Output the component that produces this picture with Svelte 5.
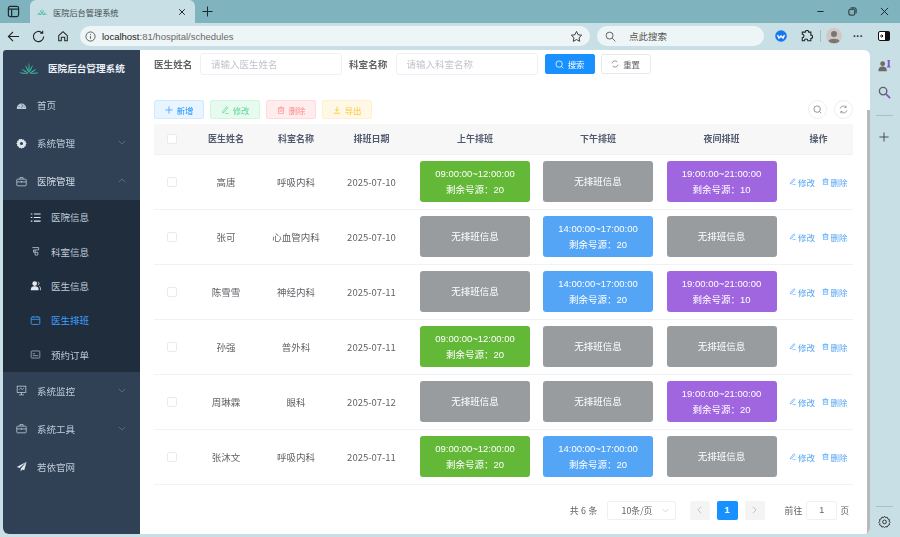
<script>
  const sched = {
    am: ['09:00:00~12:00:00', 'c-am'],
    pm: ['14:00:00~17:00:00', 'c-pm'],
    ni: ['19:00:00~21:00:00', 'c-ni'],
  };
  const rows = [
    ['高唐', '呼吸内科', '2025-07-10', ['am', 20], null, ['ni', 10]],
    ['张可', '心血管内科', '2025-07-10', null, ['pm', 20], null],
    ['陈雪雪', '神经内科', '2025-07-11', null, ['pm', 20], ['ni', 10]],
    ['孙强', '普外科', '2025-07-11', ['am', 20], null, null],
    ['周琳霖', '眼科', '2025-07-12', null, null, ['ni', 20]],
    ['张沐文', '呼吸内科', '2025-07-11', ['am', 20], ['pm', 20], null],
  ];
  const subs = ['医院信息', '科室信息', '医生信息', '医生排班', '预约订单'];
  const leaf = 'M12 12.500C11 8 11.200 4 12 .5c.8 3.500 1 7.500 0 12zM11.500 12.500C9.500 9.500 8 6.500 7.200 3c2.300 2.500 4 5.500 4.800 9.500zM12.500 12.500c2-3 3.500-6 4.300-9.500-2.300 2.500-4 5.500-4.800 9.500zM11 12.800C8 10.500 5.500 9 3 8.300c2.500 2.700 5 4.300 8 5.200zM13 12.800c3-2.300 5.500-3.800 8-4.500-2.500 2.700-5 4.300-8 5.200zM10.500 13.300C7 12.800 3.500 12.300.3 12.600c3.200 1.400 6.500 1.600 10.200 1.200zM13.500 13.300c3.500-.5 7-1 10.200-.7-3.200 1.400-6.500 1.600-10.200 1.200z';
</script>

<div class="screen">
  <header class="tabbar">
    <svg class="tabs-ic" viewBox="0 0 14 14" width="13" height="13"><rect x="1.500" y="1.500" width="11" height="11" rx="2" fill="none" stroke="#1d2b30" stroke-width="1.300"/><path d="M1.500 4.500h11M5 4.500v8" stroke="#1d2b30" stroke-width="1.300" fill="none"/></svg>
    <div class="tab">
      <svg viewBox="0 0 24 14" width="12" height="7"><path d={leaf} fill="#4db6a0"/></svg>
      <span class="tab-title">医院后台管理系统</span>
      <svg class="tab-x" viewBox="0 0 10 10" width="8" height="8"><path d="M1.500 1.500l7 7M8.500 1.500l-7 7" stroke="#222" stroke-width="1.200"/></svg>
    </div>
    <svg class="tab-plus" viewBox="0 0 12 12" width="11" height="11"><path d="M6 .5v11M.5 6h11" stroke="#1d2b30" stroke-width="1.100"/></svg>
    <div class="win">
      <svg viewBox="0 0 10 10" width="9" height="9"><path d="M1.500 5h7" stroke="#1d2b30" stroke-width="1.100"/></svg>
      <svg viewBox="0 0 10 10" width="9" height="9"><rect x="1" y="2.500" width="6.500" height="6.500" rx="1.200" fill="none" stroke="#1d2b30" stroke-width="1.100"/><path d="M3 1h4.500A1.500 1.500 0 0 1 9 2.500V7" fill="none" stroke="#1d2b30" stroke-width="1.100"/></svg>
      <svg viewBox="0 0 10 10" width="9" height="9"><path d="M1 1l8 8M9 1l-8 8" stroke="#1d2b30" stroke-width="1.100"/></svg>
    </div>
  </header>

  <nav class="toolbar">
    <svg class="tb-ic" viewBox="0 0 14 14" width="13" height="13"><path d="M13 7H1.500M6.500 2L1.500 7l5 5" fill="none" stroke="#222" stroke-width="1.200"/></svg>
    <svg class="tb-ic" viewBox="0 0 14 14" width="13" height="13"><path d="M12.500 7A5.500 5.500 0 1 1 10.800 3M11.500 .8V3.500H8.800" fill="none" stroke="#222" stroke-width="1.200"/></svg>
    <svg class="tb-ic" viewBox="0 0 14 14" width="12" height="12"><path d="M2 6.500L7 2l5 4.500V12.500H9V8.500H5v4H2z" fill="none" stroke="#222" stroke-width="1.200" stroke-linejoin="round"/></svg>
    <div class="addr">
      <svg viewBox="0 0 12 12" width="11" height="11"><circle cx="6" cy="6" r="5" fill="none" stroke="#555" stroke-width="1"/><path d="M6 5.500v3M6 3.200v1" stroke="#555" stroke-width="1"/></svg>
      <span class="url"><b>localhost</b>:81/hospital/schedules</span>
      <svg class="star" viewBox="0 0 14 14" width="13" height="13"><path d="M7 1.500l1.700 3.600 3.900.5-2.900 2.700.8 3.900L7 10.300l-3.500 1.900.8-3.900L1.400 5.600l3.900-.5z" fill="none" stroke="#333" stroke-width="1"/></svg>
    </div>
    <div class="bsearch">
      <svg viewBox="0 0 12 12" width="11" height="11"><circle cx="5" cy="5" r="3.800" fill="none" stroke="#555" stroke-width="1"/><path d="M8 8l3.300 3.300" stroke="#555" stroke-width="1"/></svg>
      <span>点此搜索</span>
    </div>
    <div class="ext">
      <svg viewBox="0 0 12 12" width="12" height="12"><circle cx="6" cy="6" r="5.800" fill="#1677f0"/><path d="M2.500 5l1.500 3 2-2 2 2 1.500-3" fill="none" stroke="#fff" stroke-width="1.400"/></svg>
      <svg class="puzzle" viewBox="0 0 14 14" width="12" height="12"><path d="M5 2.500a2 2 0 0 1 4 0h2.500V6a2 2 0 0 1 0 4v2.500H8a2 2 0 0 0-4 0H1.500V9a2 2 0 0 0 0-4V2.500z" fill="none" stroke="#222" stroke-width="1.300"/></svg>
      <i class="sep"></i>
      <svg viewBox="0 0 16 16" width="16" height="16"><circle cx="8" cy="8" r="8" fill="#cfc8c4"/><circle cx="8" cy="6" r="3" fill="#7b7673"/><path d="M2.500 13c1-3 10-3 11 0-2.500 3-8.500 3-11 0z" fill="#7b7673"/></svg>
      <span class="dots">···</span>
      <svg class="panel" viewBox="0 0 12 10" width="12" height="10"><rect x=".5" y=".5" width="11" height="9" rx="1.500" fill="#fff" stroke="#111"/><rect x="7" y=".5" width="4.500" height="9" fill="#111"/><path d="M2 5h3M3.500 3.500L5 5 3.500 6.500" stroke="#111" fill="none"/></svg>
    </div>
  </nav>

  <div class="stage">
    <div class="window">
      <aside class="side">
        <div class="brand">
          <svg viewBox="0 0 24 14" width="20" height="12"><path d={leaf} fill="#3fb59a"/></svg>
          <span>医院后台管理系统</span>
        </div>
        <a class="item">
          <svg class="mi" viewBox="0 0 14 14"><path d="M1 10.500a6 6 0 0 1 12 0c0 .5-.2.900-.6.900H1.600c-.4 0-.6-.4-.6-.9z" fill="#bfcbd9"/><path d="M7 10L9 6.200M4 8v1M10.500 8.500v1M7 5v1" stroke="#304156" stroke-width=".9"/></svg>
          <span>首页</span>
        </a>
        <a class="item">
          <svg class="mi" viewBox="0 0 14 14"><path fill-rule="evenodd" d="M7 .8l1.300 1.400 1.900-.3.600 1.800 1.800.6-.3 1.900L13.700 7l-1.400 1.300.3 1.900-1.800.6-.6 1.800-1.900-.3L7 13.700l-1.300-1.400-1.900.3-.6-1.800-1.800-.6.3-1.900L.3 7l1.400-1.300-.3-1.900 1.800-.6.6-1.800 1.900.3zM7 5a2 2 0 1 0 0 4 2 2 0 0 0 0-4z" fill="#dfe5ec"/></svg>
          <span>系统管理</span>
          <svg class="chev" viewBox="0 0 10 6"><path d="M1 1l4 4 4-4" fill="none" stroke="#6f7d8e" stroke-width=".9"/></svg>
        </a>
        <a class="item">
          <svg class="mi" viewBox="0 0 14 14"><rect x="1" y="4" width="12" height="8.500" rx="1" fill="none" stroke="#bfcbd9"/><path d="M5 4V2h4v2M1 7.500h12M7 6.500v2" fill="none" stroke="#bfcbd9"/></svg>
          <span class="hot">医院管理</span>
          <svg class="chev" viewBox="0 0 10 6"><path d="M1 5l4-4 4 4" fill="none" stroke="#6f7d8e" stroke-width=".9"/></svg>
        </a>
        <div class="subs">
          {#each subs as s, i}
            <a class="sub" class:on={i === 3}>
              <svg class="si" viewBox="0 0 14 14">
                {#if i === 0}
                  <path d="M1 2.500h2M5 2.500h8.500M1 7h2M5 7h8.500M1 11.500h2M5 11.500h8.500" stroke="#e4e9ef" stroke-width="1.500"/>
                {:else if i === 1}
                  <path d="M3 2h8v3H4.500v3H10v3.500H6.500V5" fill="none" stroke="#bfcbd9" stroke-width="1"/>
                {:else if i === 2}
                  <circle cx="6" cy="4.500" r="3" fill="#e4e9ef"/><path d="M1 13c0-4 2-5 5-5s5 1 5 5z" fill="#e4e9ef"/><path d="M10 2.500c2 .5 2 3.500 0 4M12 8c1 1 1.500 2.500 1.500 5" fill="none" stroke="#e4e9ef"/>
                {:else if i === 3}
                  <rect x="1.500" y="2.500" width="11" height="9.500" rx="1.500" fill="none" stroke="#409eff" stroke-width="1.100"/><path d="M1.500 5.500h11M4 1.500v2M10 1.500v2" stroke="#409eff"/>
                {:else}
                  <rect x="1.500" y="2.500" width="11" height="9" rx="1" fill="none" stroke="#a6b2c0"/><path d="M3.500 6h3M3.500 8.500h7" stroke="#a6b2c0"/>
                {/if}
              </svg>
              <span>{s}</span>
            </a>
          {/each}
        </div>
        <a class="item">
          <svg class="mi" viewBox="0 0 14 14"><rect x="1.500" y="1.500" width="11" height="8" fill="none" stroke="#bfcbd9"/><path d="M7 9.500v3M4 12.500h6M4 6l2-2 2 2 2-2" fill="none" stroke="#bfcbd9"/></svg>
          <span>系统监控</span>
          <svg class="chev" viewBox="0 0 10 6"><path d="M1 1l4 4 4-4" fill="none" stroke="#6f7d8e" stroke-width=".9"/></svg>
        </a>
        <a class="item">
          <svg class="mi" viewBox="0 0 14 14"><rect x="1" y="4" width="12" height="8.500" rx="1" fill="none" stroke="#bfcbd9"/><path d="M5 4V2h4v2M1 7.500h12M7 6.500v2" fill="none" stroke="#bfcbd9"/></svg>
          <span>系统工具</span>
          <svg class="chev" viewBox="0 0 10 6"><path d="M1 1l4 4 4-4" fill="none" stroke="#6f7d8e" stroke-width=".9"/></svg>
        </a>
        <a class="item">
          <svg class="mi" viewBox="0 0 14 14"><path d="M13.500 1L1 7.500l3.500 1.500L13.500 1 6 10v3.500l2-2.800 2.500 1z" fill="#e4e9ef"/></svg>
          <span>若依官网</span>
        </a>
      </aside>

      <main class="main">
        <form class="filters">
          <label for="f1">医生姓名</label>
          <div class="field w142"><input id="f1" placeholder="请输入医生姓名" /></div>
          <label for="f2">科室名称</label>
          <div class="field w142"><input id="f2" placeholder="请输入科室名称" /></div>
          <button type="button" class="btn primary">
            <svg viewBox="0 0 12 12" width="9" height="9"><circle cx="5.500" cy="5.500" r="4.300" fill="none" stroke="#fff" stroke-width="1"/><path d="M8.500 8.500l2.500 2.500" stroke="#fff"/></svg>
            搜索
          </button>
          <button type="button" class="btn ghost">
            <svg viewBox="0 0 12 12" width="8" height="8"><path d="M1.500 5a4.600 4.600 0 0 1 8-2M10.500 7a4.600 4.600 0 0 1-8 2" fill="none" stroke="#666" stroke-width="1"/></svg>
            重置
          </button>
        </form>

        <div class="actions">
          <button type="button" class="act a-blue"><svg viewBox="0 0 10 10" width="8" height="8"><path d="M5 .5v9M.5 5h9" stroke="#409eff"/></svg>新增</button>
          <button type="button" class="act a-green"><svg viewBox="0 0 10 10" width="8" height="8"><path d="M2 7l5-6 1.500 1.200-5 6L2 8.500zM5 9.500h4.500" fill="none" stroke="#52d98d" stroke-width=".9"/></svg>修改</button>
          <button type="button" class="act a-red"><svg viewBox="0 0 10 10" width="8" height="8"><path d="M2 2.500h6v7H2zM.8 2.500h8.400M4 1h2M4 4.500v3M6 4.500v3" fill="none" stroke="#ff8b8b" stroke-width=".9"/></svg>删除</button>
          <button type="button" class="act a-yellow"><svg viewBox="0 0 10 10" width="8" height="8"><path d="M5 1v5.500M2.800 4.300L5 6.500l2.200-2.200M1 9h8" fill="none" stroke="#ffba00" stroke-width=".9"/></svg>导出</button>
          <div class="round-group">
            <span class="round"><svg viewBox="0 0 12 12" width="9" height="9"><circle cx="5.500" cy="5.500" r="4.300" fill="none" stroke="#777" stroke-width="1"/><path d="M8.500 8.500l2.500 2.500" stroke="#777"/></svg></span>
            <span class="round"><svg viewBox="0 0 12 12" width="9" height="9"><path d="M1.500 5a4.600 4.600 0 0 1 8-2M9.500 1v2.300H7.200M10.500 7a4.600 4.600 0 0 1-8 2M2.500 11V8.700h2.300" fill="none" stroke="#777" stroke-width=".9"/></svg></span>
          </div>
        </div>

        <table class="grid">
          <colgroup>
            <col class="c36" /><col class="c72" /><col class="c68" /><col class="c83" />
            <col class="c124" /><col class="c122" /><col class="c125" /><col class="c69" />
          </colgroup>
          <thead>
            <tr>
              <th><i class="check"></i></th>
              <th>医生姓名</th><th>科室名称</th><th>排班日期</th>
              <th>上午排班</th><th>下午排班</th><th>夜间排班</th><th>操作</th>
            </tr>
          </thead>
          <tbody>
            {#each rows as r}
              <tr>
                <td><i class="check"></i></td>
                <td>{r[0]}</td><td>{r[1]}</td><td>{r[2]}</td>
                {#each [r[3], r[4], r[5]] as c}
                  <td>
                    {#if c}
                      <div class="card {sched[c[0]][1]}"><span>{sched[c[0]][0]}</span><span>剩余号源：{c[1]}</span></div>
                    {:else}
                      <div class="card c-none"><span>无排班信息</span></div>
                    {/if}
                  </td>
                {/each}
                <td>
                  <div class="ops">
                    <a><svg viewBox="0 0 10 10" width="7" height="7"><path d="M2 7l5-6 1.500 1.200-5 6L2 8.500zM5 9.500h4.500" fill="none" stroke="#409eff" stroke-width=".9"/></svg>修改</a>
                    <a><svg viewBox="0 0 10 10" width="7" height="7"><path d="M2 2.500h6v7H2zM.8 2.500h8.400M4 1h2M4 4.500v3M6 4.500v3" fill="none" stroke="#409eff" stroke-width=".9"/></svg>删除</a>
                  </div>
                </td>
              </tr>
            {/each}
          </tbody>
        </table>

        <div class="pager">
          <span class="total">共 6 条</span>
          <span class="size">10条/页<svg viewBox="0 0 10 6" width="7" height="5"><path d="M1 1l4 4 4-4" fill="none" stroke="#c0c4cc"/></svg></span>
          <span class="pg"><svg viewBox="0 0 6 10" width="5" height="8"><path d="M5 1L1 5l4 4" fill="none" stroke="#b4b7bd"/></svg></span>
          <span class="pg cur">1</span>
          <span class="pg last"><svg viewBox="0 0 6 10" width="5" height="8"><path d="M1 1l4 4-4 4" fill="none" stroke="#b4b7bd"/></svg></span>
          <span class="goto">前往</span>
          <span class="jump">1</span>
          <span class="ye">页</span>
        </div>
      </main>
      <div class="thumb"></div>
    </div>

    <aside class="rail">
      <svg class="r1" viewBox="0 0 16 16" width="15" height="15"><circle cx="6" cy="6" r="2.600" fill="#6d6a68"/><path d="M1.500 14c0-4 2-5 4.500-5s4.500 1 4.500 5z" fill="#6d6a68"/><path d="M10.500 2h4l-1 1v5l1 2h-4l1-2V3z" fill="#7f58c9"/></svg>
      <svg class="r2" viewBox="0 0 14 14" width="13" height="13"><circle cx="5.500" cy="5.500" r="4" fill="none" stroke="#5d6266" stroke-width="1.500"/><path d="M8.500 8.500L13 13" stroke="#8a4bc7" stroke-width="1.800"/></svg>
      <i class="rsep"></i>
      <svg class="r3" viewBox="0 0 12 12" width="10" height="10"><path d="M6 .5v11M.5 6h11" stroke="#333" stroke-width="1"/></svg>
      <i class="rsep bottom"></i>
      <svg class="r4" viewBox="0 0 16 16" width="13" height="13"><path d="M8 1.500l1.200 1.700 2.100-.4.800 2 2 .8-.4 2.100L15 9l-1.300 1.300.4 1.900-2 .8-.8 1.800-2.100-.4L8 15.500l-1.200-1.100-2.100.4-.8-1.800-2-.8.4-1.900L1 9l1.300-1.300-.4-2.100 2-.8.8-2 2.100.4z" fill="none" stroke="#222" stroke-width="1.100"/><circle cx="8" cy="8.500" r="2.300" fill="none" stroke="#222" stroke-width="1.100"/></svg>
    </aside>
  </div>
</div>

<style>
  :global(body) { margin: 0; background: #c8e0e5; }
  * { box-sizing: border-box; }
  .screen {
    width: 900px; height: 537px; overflow: hidden; display: flex; flex-direction: column;
    font-family: "Noto Sans CJK SC", "Liberation Sans", sans-serif;
    font-size: 9.5px; color: #606266; filter: blur(.35px);
  }
  a { text-decoration: none; color: inherit; }
  svg { display: block; flex: none; }

  .tabbar { height: 23px; background: #7fb4bf; display: flex; align-items: center; padding-left: 7px; }
  .tabs-ic { margin-right: 10px; }
  .tab {
    width: 165px; height: 23px; background: #c8e0e5; border-radius: 6px 6px 0 0;
    display: flex; align-items: center; padding: 0 9px 0 6px;
  }
  .tab svg:first-child { margin-left: 0; margin-right: 5px; }
  .tab-title { flex: 1; font-size: 8.2px; color: #444d50; }
  .tab-plus { margin-left: 7px; }
  .win { margin-left: auto; display: flex; gap: 23px; padding-right: 11px; }

  .toolbar { height: 27px; background: #c8e0e5; display: flex; align-items: center; padding: 0 0 1px 7px; }
  .tb-ic { margin-right: 12px; }
  .tb-ic:nth-child(3) { margin-right: 11px; }
  .addr {
    width: 510px; height: 20px; border-radius: 10px; background: #eef5f6; display: flex; align-items: center; padding: 0 7px 0 5px;
    gap: 6px;
  }
  .url { flex: 1; font: 9.5px "Liberation Sans", sans-serif; color: #66696b; }
  .url b { font-weight: 400; color: #222; }
  .bsearch {
    width: 167px; height: 20px; border-radius: 10px; margin-left: 7px; background: #eef5f6; display: flex; align-items: center; padding-left: 8px; gap: 13px;
    color: #555; font-size: 9.5px;
  }
  .ext { display: flex; align-items: center; margin-left: 11px; }
  .puzzle { margin-left: 14px; }
  .sep { width: 1px; height: 12px; background: #a7bcc1; margin: 0 5px 0 7px; }
  .dots { font: 700 10px "Liberation Sans", sans-serif; color: #222; width: 32px; text-align: center; }
  .panel { margin-left: 4px; }

  .stage { flex: 1; display: flex; min-height: 0; }
  .window {
    width: 867px; margin: 0 0 3px 3px; background: #fff; display: flex; position: relative; border-radius: 3px 6px 6px 6px; overflow: hidden;
  }
  .thumb { position: absolute; right: 0; top: 60px; bottom: 0; width: 3px; background: #b8b8b8; }

  .side { width: 137px; background: #304156; color: #bfcbd9; flex: none; }
  .brand { height: 36px; display: flex; align-items: center; color: #eef2f6; font-weight: 700; padding-left: 16px; gap: 9px; }
  .brand span { font-size: 9.6px; }
  .item { height: 38px; display: flex; align-items: center; padding-left: 13px; position: relative; }
  .mi { width: 11px; height: 11px; margin-right: 10px; }
  .hot { color: #d7dfe7; }
  .chev { position: absolute; left: 115px; top: 16px; width: 8px; height: 5px; }
  .subs { background: #1f2d3d; }
  .sub { height: 34.4px; display: flex; align-items: center; padding-left: 26.500px; }
  .si { width: 11px; height: 11px; margin-right: 10.500px; }
  .sub.on { color: #409eff; }

  .main { flex: 1; min-width: 0; padding: 3px 0 0 14px; }
  .filters { display: flex; align-items: center; height: 22px; }
  label { font-weight: 700; font-size: 9.6px; color: #606266; width: 46px; }
  .filters label:nth-of-type(2) { margin-left: 7px; width: 46.5px; }
  .field { height: 22px; border: 1px solid #eef0f4; border-radius: 3px; }
  .w142 { width: 142px; }
  input {
    width: 100%; height: 100%; border: 0; outline: 0; padding: 0 0 0 10px; background: transparent;
    font: 9.5px "Noto Sans CJK SC", sans-serif;
  }
  input::placeholder { color: #c0c4cc; opacity: 1; }
  .btn {
    height: 20px; width: 50px; border-radius: 2px; display: flex; align-items: center; justify-content: center; gap: 4px;
    font: 8.4px "Noto Sans CJK SC", sans-serif; padding: 0;
  }
  .primary { background: #1890ff; border: 1px solid #1890ff; color: #fff; margin-left: 7px; }
  .ghost { background: #fff; border: 1px solid #e8eaee; color: #606266; margin-left: 6px; }

  .actions { display: flex; align-items: center; height: 19px; margin-top: 25px; gap: 6px; padding-right: 17px; }
  .act {
    width: 50px; height: 19px; border-radius: 2px; display: flex; align-items: center; justify-content: center; gap: 4px;
    font: 8.4px "Noto Sans CJK SC", sans-serif; padding: 0; border: 1px solid;
  }
  .a-blue { background: #e8f4ff; border-color: #d1e9ff; color: #1890ff; }
  .a-green { background: #e7faf0; border-color: #d0f5e0; color: #5fd794; }
  .a-red { background: #ffeded; border-color: #ffdbdb; color: #ff8b8b; }
  .a-yellow { background: #fff8e6; border-color: #fff1cc; color: #ffc83d; }
  .round-group { margin-left: auto; display: flex; gap: 7px; }
  .round { width: 19px; height: 19px; border-radius: 50%; border: 1px solid #eceef2; display: flex; align-items: center; justify-content: center; }

  .grid { width: 699px; table-layout: fixed; border-collapse: collapse; margin-top: 5px; }
  .c36 { width: 36px; } .c72 { width: 72px; } .c68 { width: 68px; } .c83 { width: 83px; }
  .c124 { width: 124px; } .c122 { width: 122px; } .c125 { width: 125px; } .c69 { width: 69px; }
  th {
    height: 30px; background: #f7f7f8; font-weight: 700; font-size: 9px; color: #515a6e; text-align: center; padding: 0;
    border-bottom: 1px solid #eef0f4;
  }
  td { height: 55px; text-align: center; padding: 0; border-bottom: 1px solid #f0f2f5; font-size: 9.5px; }
  .check { display: block; width: 10px; height: 10px; margin: 0 auto 0 13px; border: 1px solid #e8eaee; border-radius: 2px; background: #fff; }
  .card {
    width: 110px; height: 41px; margin: 0 auto; border-radius: 3px; color: #fff; display: flex; flex-direction: column; align-items: center; justify-content: center;
    line-height: 16px; font-size: 9.5px; font-family: "Liberation Sans", "Noto Sans CJK SC", sans-serif;
  }
  .c-am { background: #63b837; }
  .c-pm { background: #55a5f6; }
  .c-ni { background: #a066e0; }
  .c-none { background: #999c9f; }
  .ops { display: flex; justify-content: center; gap: 7px; font-size: 8.5px; line-height: 12px; white-space: nowrap; }
  .ops a { display: flex; align-items: center; gap: 1.500px; color: #55a5f6; }

  .pager { display: flex; align-items: center; height: 19px; margin-top: 16px; width: 699px; justify-content: flex-end; font-size: 8.8px; color: #606266; }
  .total { margin-right: 9px; letter-spacing: .3px; }
  .size { width: 69px; height: 19px; border: 1px solid #eef0f4; border-radius: 2px; display: flex; align-items: center; justify-content: space-between; padding: 0 6px 0 14px; margin-right: 14px; }
  .pg { width: 20px; height: 19px; background: #f4f4f5; border-radius: 2px; display: flex; align-items: center; justify-content: center; margin-right: 7px; }
  .pg.cur { background: #1890ff; color: #fff; font: 700 9px "Liberation Sans", sans-serif; width: 21px; }
  .pg.last { margin-right: 20px; }
  .goto { margin-right: 4px; }
  .jump { width: 31px; height: 19px; border: 1px solid #eef0f4; border-radius: 2px; display: flex; align-items: center; justify-content: center; font: 9px "Liberation Sans", sans-serif; }
  .ye { margin-left: 3px; margin-right: 4px; }

  .rail { flex: 1; position: relative; }
  .rail svg, .rsep { position: absolute; }
  .r1 { left: 7px; top: 8px; }
  .r2 { left: 8px; top: 36px; }
  .rsep { left: 6px; width: 17px; height: 1px; background: #a9c0c5; top: 65px; }
  .rsep.bottom { top: 456px; }
  .r3 { left: 9px; top: 82px; }
  .r4 { left: 8px; top: 465px; }
</style>
